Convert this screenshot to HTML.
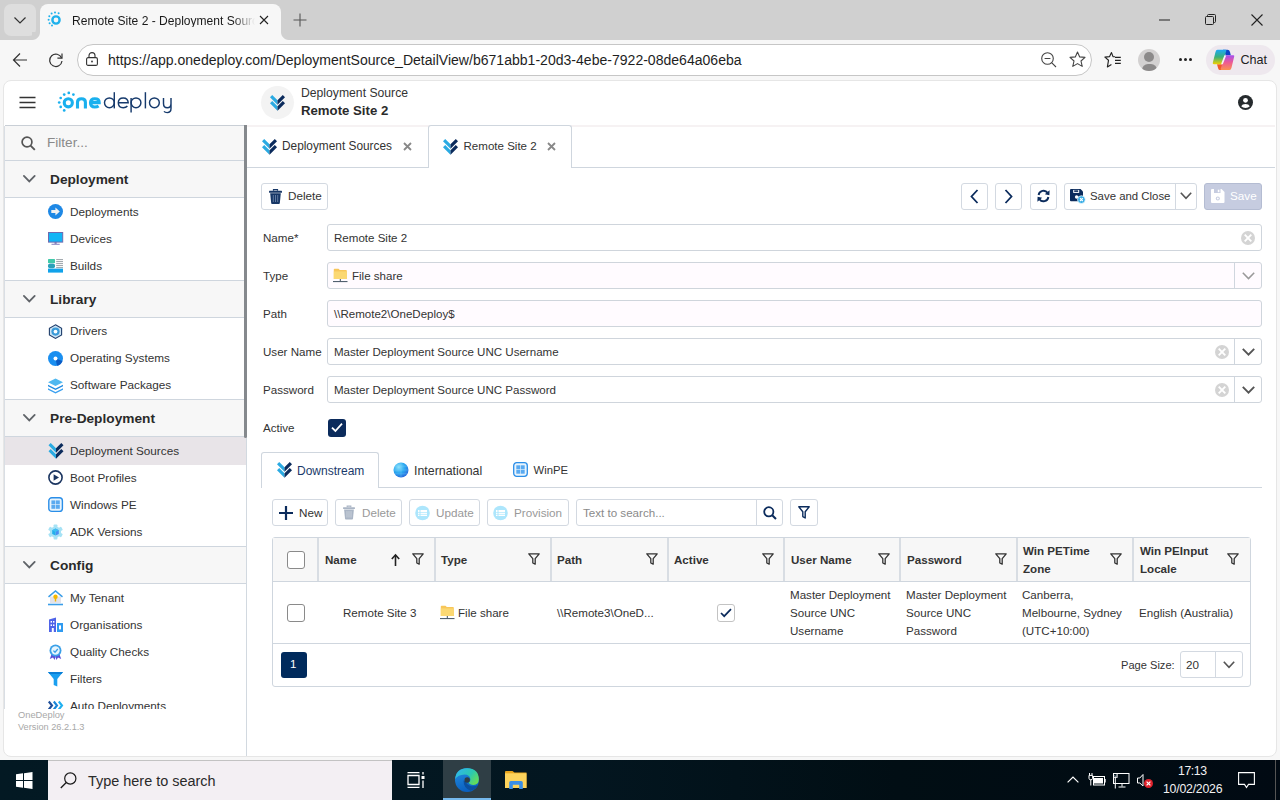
<!DOCTYPE html>
<html><head><meta charset="utf-8">
<style>
*{box-sizing:border-box;margin:0;padding:0}
html,body{width:1280px;height:800px;overflow:hidden;background:#f7f7f7;font-family:"Liberation Sans",sans-serif;color:#333}
.a{position:absolute}
.t{position:absolute;white-space:nowrap;line-height:1}
svg{position:absolute;overflow:visible}
/* browser chrome */
#tabstrip{left:0;top:0;width:1280px;height:40px;background:#d0d0d0}
#toolbar{left:0;top:40px;width:1280px;height:40px;background:#f7f7f7}
#card{left:3px;top:80px;width:1274px;height:677px;background:#fff;border-radius:8px;border:1px solid #e6e6e6}
.sbh{position:absolute;left:5px;width:241px;height:37px;background:#f7f7f7;border-bottom:1px solid #cfd6de}
.sbh .tx{position:absolute;left:45px;top:12px;font-weight:bold;font-size:13.7px;color:#2a2a2a;line-height:1}
.sbi{position:absolute;left:5px;width:238px;height:27px}
.sbi .tx{position:absolute;left:65px;top:8px;font-size:11.75px;color:#333;line-height:1;white-space:nowrap}
.sbi svg{left:43px;top:6px}
.sbb{position:absolute;left:5px;width:241px;height:1px;background:#cfd6de}
.btn{position:absolute;height:27px;border:1px solid #d3d9e1;border-radius:3px;background:#fff}
.inp{position:absolute;left:327px;width:935px;height:27px;border:1px solid #cfd5dc;border-radius:3px;background:#fff}
.lbl{position:absolute;left:263px;font-size:11.6px;color:#333;line-height:1;white-space:nowrap}
.inp .tx{position:absolute;left:6px;top:8px;font-size:11.55px;color:#333;line-height:1;white-space:nowrap}
.gh{position:absolute;top:554px;font-weight:bold;font-size:11.6px;color:#333;line-height:1;white-space:nowrap}
.gc{position:absolute;font-size:11.6px;color:#333;line-height:1;white-space:nowrap}
.vsep{position:absolute;top:538px;width:2px;height:43px;background:#d8dde3}
.sbi.lib .tx{top:7px}
</style></head><body>

<!-- ============ TAB STRIP ============ -->
<div id="tabstrip" class="a">
  <div class="a" style="left:4px;top:4px;width:32px;height:32px;background:#dedede;border-radius:7px"></div>
  <svg style="left:14px;top:17px" width="12" height="7" viewBox="0 0 12 7"><path d="M0.5 0.5 L6 6 L11.5 0.5" fill="none" stroke="#333" stroke-width="1.2"/></svg>
  <div class="a" style="left:40px;top:4px;width:241px;height:36px;background:#f7f7f7;border-radius:8px 8px 0 0"></div>
  <div class="a" style="left:32px;top:32px;width:8px;height:8px;background:radial-gradient(circle at 0 0,#d0d0d0 7.5px,#f7f7f7 8.5px)"></div>
  <div class="a" style="left:281px;top:32px;width:8px;height:8px;background:radial-gradient(circle at 100% 0,#d0d0d0 7.5px,#f7f7f7 8.5px)"></div>
  <!-- favicon -->
  <svg style="left:47px;top:11px" width="16" height="16" viewBox="0 0 16 16">
    <circle cx="9" cy="9" r="3.6" fill="none" stroke="#1fb1ec" stroke-width="2.4"/>
    <g fill="#1fb1ec"><circle cx="8" cy="1.6" r="1"/><circle cx="11.6" cy="2.3" r="1"/><circle cx="4.6" cy="2.6" r="1"/><circle cx="2.3" cy="5.3" r="1"/><circle cx="1.6" cy="8.8" r="1"/><circle cx="2.6" cy="12.2" r="1"/><circle cx="5" cy="14.6" r="1"/></g>
  </svg>
  <div class="t" style="left:72px;top:15px;font-size:12.05px;color:#1a1a1a;width:183px;overflow:hidden;-webkit-mask-image:linear-gradient(90deg,#000 88%,transparent)">Remote Site 2 - Deployment Source</div>
  <svg style="left:259px;top:15px" width="10" height="10" viewBox="0 0 10 10"><path d="M1 1L9 9M9 1L1 9" stroke="#222" stroke-width="1.1"/></svg>
  <svg style="left:293px;top:13px" width="14" height="14" viewBox="0 0 14 14"><path d="M7 0.5V13.5M0.5 7H13.5" stroke="#555" stroke-width="1.1"/></svg>
  <!-- window controls -->
  <svg style="left:1159px;top:19px" width="12" height="2" viewBox="0 0 12 2"><path d="M0 1H11" stroke="#222" stroke-width="1"/></svg>
  <svg style="left:1205px;top:14px" width="12" height="12" viewBox="0 0 12 12"><rect x="0.5" y="2.5" width="8" height="8" rx="1" fill="none" stroke="#222"/><path d="M2.5 2.5V1.5Q2.5 0.5 3.5 0.5H9.5Q10.5 0.5 10.5 1.5V7.5Q10.5 8.5 9.5 8.5H8.5" fill="none" stroke="#222"/></svg>
  <svg style="left:1251px;top:14px" width="12" height="12" viewBox="0 0 12 12"><path d="M0.5 0.5L11.5 11.5M11.5 0.5L0.5 11.5" stroke="#222" stroke-width="1.1"/></svg>
</div>

<!-- ============ TOOLBAR ============ -->
<div id="toolbar" class="a">
  <svg style="left:12px;top:12px" width="16" height="16" viewBox="0 0 16 16"><path d="M15 8H1.5M8 1.5L1.5 8L8 14.5" fill="none" stroke="#333" stroke-width="1.2"/></svg>
  <svg style="left:48px;top:12px" width="16" height="16" viewBox="0 0 16 16"><path d="M13.6 6A6.2 6.2 0 1 0 14 9" fill="none" stroke="#333" stroke-width="1.2"/><path d="M14 1.5V6.2H9.4" fill="none" stroke="#333" stroke-width="1.2"/></svg>
  <div class="a" style="left:77px;top:4px;width:1015px;height:32px;border:1px solid #c6c6c6;border-radius:16px;background:#fff"></div>
  <svg style="left:86px;top:12px" width="12" height="14" viewBox="0 0 12 14"><rect x="0.6" y="5.6" width="10.8" height="7.8" rx="1.5" fill="none" stroke="#333" stroke-width="1.1"/><path d="M3 5.6V3.6A3 3 0 0 1 9 3.6V5.6" fill="none" stroke="#333" stroke-width="1.1"/><circle cx="6" cy="9.5" r="0.9" fill="#333"/></svg>
  <div class="t" style="left:108px;top:13px;font-size:14.05px;color:#1e1e1e">https://app.onedeploy.com/DeploymentSource_DetailView/b671abb1-20d3-4ebe-7922-08de64a06eba</div>
  <svg style="left:1041px;top:12px" width="16" height="16" viewBox="0 0 16 16"><circle cx="6.5" cy="6.5" r="5.8" fill="none" stroke="#444" stroke-width="1.1"/><path d="M3.6 6.5H9.4M10.6 10.6L15 15" stroke="#444" stroke-width="1.1"/></svg>
  <svg style="left:1069px;top:11px" width="17" height="17" viewBox="0 0 17 17"><path d="M8.5 1L10.7 5.9L16 6.4L12 10L13.2 15.4L8.5 12.6L3.8 15.4L5 10L1 6.4L6.3 5.9Z" fill="none" stroke="#444" stroke-width="1.1" stroke-linejoin="round"/></svg>
  <svg style="left:1104px;top:12px" width="18" height="16" viewBox="0 0 18 16"><path d="M11 4.8L9 4.6L7.5 0.6L5.6 4.6L0.9 5.1L4.5 8.3L3.4 14.9L7.4 12.5" fill="none" stroke="#222" stroke-width="1.15" stroke-linejoin="round"/><path d="M11 5.3H16.8M11 8.3H16.8M11 11.4H16.8" stroke="#222" stroke-width="1.15"/></svg>
  <div class="a" style="left:1138px;top:9px;width:22px;height:22px;border-radius:11px;background:#d3d1d1;overflow:hidden">
    <div class="a" style="left:6px;top:3px;width:10px;height:10px;border-radius:5px;background:#8c8a8a"></div>
    <div class="a" style="left:3.5px;top:14.5px;width:15px;height:12px;border-radius:7.5px;background:#8c8a8a"></div>
  </div>
  <div class="a" style="left:1178.5px;top:18.3px;width:3px;height:3px;border-radius:2px;background:#222"></div>
  <div class="a" style="left:1183.6px;top:18.3px;width:3px;height:3px;border-radius:2px;background:#222"></div>
  <div class="a" style="left:1188.5px;top:18.3px;width:3px;height:3px;border-radius:2px;background:#222"></div>
  <div class="a" style="left:1206px;top:5px;width:69px;height:30px;border-radius:15px;background:#eee8ee"></div>
  <svg style="left:1212px;top:9px" width="23" height="22" viewBox="0 0 23 22">
    <defs><linearGradient id="cpl" x1="0" y1="0" x2="0" y2="1"><stop offset="0" stop-color="#1ea8f5"/><stop offset="0.5" stop-color="#3ab07a"/><stop offset="1" stop-color="#f2d000"/></linearGradient>
    <linearGradient id="cpr" x1="0" y1="0" x2="0" y2="1"><stop offset="0" stop-color="#a54ef0"/><stop offset="0.5" stop-color="#ee5a92"/><stop offset="1" stop-color="#fb9050"/></linearGradient></defs>
    <path d="M11 0.8H15.5Q17.5 0.8 18 3L18.8 6.2H13.6L12.6 3Q12.2 1.8 11 1.8Z" fill="#0c43c8"/>
    <path d="M5 15.2H9.6L10.8 18.8Q11.2 20.2 12.4 20.2V21H8Q6.6 21 6.2 19.4Z" fill="#f2572a"/>
    <path d="M5.5 0.8H13.5Q14.6 0.8 14.3 2L10.2 14Q9.8 15.2 8.6 15.2H1.8Q0.4 15.2 0.8 13.8L3.5 3Q4 0.8 5.5 0.8Z" fill="url(#cpl)"/>
    <path d="M17.5 21H9.5Q8.4 21 8.7 19.8L12.8 7.4Q13.2 6.2 14.4 6.2H21.2Q22.6 6.2 22.2 7.6L19.5 18.8Q19 21 17.5 21Z" fill="url(#cpr)"/>
    <path d="M13.2 6.6L10 15" stroke="#f7f2f7" stroke-width="1.7"/>
  </svg>
  <div class="t" style="left:1240.5px;top:14px;font-size:12.6px;color:#222">Chat</div>
</div>

<!-- ============ PAGE CARD ============ -->
<div id="card" class="a"></div>


<!-- ============ APP HEADER ============ -->
<svg style="left:19px;top:96px" width="17" height="13" viewBox="0 0 17 13"><path d="M0.5 1.5H16.5M0.5 6.5H16.5M0.5 11.5H16.5" stroke="#333" stroke-width="1.7"/></svg>
<svg style="left:56px;top:90px" width="120" height="25" viewBox="56 90 120 25">
  <g fill="#1ab0ee"><circle cx="64.2" cy="94.6" r="1.35"/><circle cx="68.8" cy="92.9" r="1.35"/><circle cx="73.4" cy="94.6" r="1.35"/><circle cx="60.7" cy="98" r="1.35"/><circle cx="59.2" cy="102.5" r="1.35"/><circle cx="60.7" cy="106.9" r="1.35"/><circle cx="64.2" cy="110.4" r="1.35"/></g>
  <g fill="none" stroke="#1ab0ee" stroke-width="3.1">
    <circle cx="68.3" cy="102.8" r="4.05"/>
    <path d="M77.5 108.4V102.3Q77.5 98.8 81.4 98.8Q85.4 98.8 85.4 102.3V108.4"/>
    <path d="M90.6 102.6H99.2Q99.2 98.7 94.8 98.7Q90.5 98.7 90.5 102.8Q90.5 107 94.8 107Q97.2 107 98.6 106"/>
  </g>
  <g fill="none" stroke="#163a6c" stroke-width="1.45">
    <circle cx="109.4" cy="102.8" r="4.9"/><path d="M114.3 92.2V108.4"/>
    <path d="M118.4 102.8H128.2Q128 97.9 123.2 97.9Q118.3 97.9 118.3 102.8Q118.3 107.7 123.2 107.7Q126 107.7 127.4 106"/>
    <circle cx="136" cy="102.8" r="4.9"/><path d="M131.1 98V112.6"/>
    <path d="M145.4 92.2V108.4"/>
    <circle cx="154.4" cy="102.8" r="4.9"/>
    <path d="M163.5 97.9V103.4Q163.5 107.7 167.3 107.7Q171 107.7 171 103.4V97.9V108.6Q171 112.6 167.2 112.6Q165 112.6 164 111.4"/>
  </g>
</svg>
<div class="a" style="left:261px;top:86px;width:33px;height:33px;border-radius:17px;background:#f3f3f3"></div>
<svg style="left:270px;top:95px" width="15" height="16" viewBox="0 0 15 16"><path d="M0 2.2L2.2 0L7.5 5.3V9.7Z M0 8.2L2.2 6L7.5 11.3V15.7Z" fill="#2aaae2"/><path d="M7.5 5.3L12.8 0L15 2.2L7.5 9.7Z M7.5 11.3L12.8 6L15 8.2L7.5 15.7Z" fill="#0b2b5c"/></svg>
<div class="t" style="left:301px;top:87px;font-size:12.2px;color:#333">Deployment Source</div>
<div class="t" style="left:301px;top:104px;font-size:13.2px;font-weight:bold;color:#2b2b2b">Remote Site 2</div>
<svg style="left:1238px;top:95px" width="15" height="15" viewBox="0 0 15 15"><circle cx="7.5" cy="7.5" r="7.5" fill="#262b2e"/><circle cx="7.5" cy="5.3" r="2.4" fill="#fff"/><path d="M3.2 11.2Q4.2 9 7.5 9Q10.8 9 11.8 11.2Q10.2 12.9 7.5 12.9Q4.8 12.9 3.2 11.2Z" fill="#fff"/></svg>
<div class="a" style="left:5px;top:125px;width:241px;height:1px;background:#c9cfd6"></div>
<div class="a" style="left:247px;top:125px;width:1028px;height:2px;background:#f6f2f3"></div>

<!-- ============ SIDEBAR ============ -->
<div class="a" style="left:5px;top:126px;width:239px;height:34px;background:#f7f7f7"></div>
<svg style="left:21px;top:136px" width="15" height="15" viewBox="0 0 15 15"><circle cx="6" cy="6" r="4.9" fill="none" stroke="#555" stroke-width="1.7"/><path d="M9.6 9.6L13.8 13.8" stroke="#555" stroke-width="1.9"/></svg>
<div class="t" style="left:47px;top:136px;font-size:13.6px;color:#8a8a8a">Filter...</div>
<div class="sbb" style="top:160px"></div>
<div class="a" style="left:4px;top:126px;width:1px;height:583px;background:#d9dee4"></div>
<div class="a" style="left:246px;top:126px;width:1px;height:630px;background:#d2d9e0"></div>


<div class="sbh" style="top:161px"><svg style="left:18px;top:14px" width="13" height="8" viewBox="0 0 13 8"><path d="M0.9 0.9L6.3 6.4L11.7 0.9" fill="none" stroke="#5f6368" stroke-width="1.8" stroke-linecap="round"/></svg><span class="tx">Deployment</span></div>
<div class="sbi" style="top:198px"><svg width="16" height="16" viewBox="0 0 16 16"><circle cx="7.5" cy="7.5" r="7.5" fill="#1e88e5"/><path d="M3.3 6H7.4V3.4L11.8 7.5L7.4 11.6V9H3.3Z" fill="#f2f2f2"/></svg><span class="tx">Deployments</span></div>
<div class="sbi" style="top:225px"><svg width="16" height="16" viewBox="0 0 16 16"><rect x="0.5" y="1.5" width="14.2" height="9.6" fill="#12b5f5" stroke="#6f6aae" stroke-width="1"/><path d="M6.5 11.2V12.8H8.7V11.2Z" fill="#6f6aae"/><path d="M3.5 13.3H11.7" stroke="#8e8ac4" stroke-width="1.1"/></svg><span class="tx">Devices</span></div>
<div class="sbi" style="top:252px"><svg width="16" height="16" viewBox="0 0 16 16"><rect x="0" y="1" width="7" height="4" rx="0.6" fill="#40c9a9"/><rect x="0" y="5.4" width="7" height="4.8" rx="2" fill="#2aa0b8"/><rect x="0" y="10.6" width="15" height="4" fill="#10a2ea"/><path d="M8.2 1.6H15M8.2 3.6H15M8.2 5.6H15M8.2 7.6H15M8.2 9.6H15" stroke="#9aa3a8" stroke-width="1"/></svg><span class="tx">Builds</span></div>
<div class="sbb" style="top:280px"></div>

<div class="sbh" style="top:281px"><svg style="left:18px;top:14px" width="13" height="8" viewBox="0 0 13 8"><path d="M0.9 0.9L6.3 6.4L11.7 0.9" fill="none" stroke="#5f6368" stroke-width="1.8" stroke-linecap="round"/></svg><span class="tx">Library</span></div>
<div class="sbi lib" style="top:318px"><svg width="16" height="16" viewBox="0 0 16 16"><path d="M7.5 0.8L13.6 4.2V11L7.5 14.4L1.4 11V4.2Z" fill="#cde5f5" stroke="#1f3d6b" stroke-width="1.1"/><circle cx="7.5" cy="7.6" r="4.1" fill="#3a9ad8"/><circle cx="7.5" cy="7.6" r="1.9" fill="#fff"/></svg><span class="tx">Drivers</span></div>
<div class="sbi lib" style="top:345px"><svg width="16" height="16" viewBox="0 0 16 16"><circle cx="7.5" cy="7.5" r="7.5" fill="#1a8ff0"/><path d="M7.5 7.5L14.5 10A7.5 7.5 0 0 1 9 14.8Z" fill="#0b5bc4"/><circle cx="7.5" cy="7.5" r="2" fill="#fff"/></svg><span class="tx">Operating Systems</span></div>
<div class="sbi lib" style="top:372px"><svg width="16" height="16" viewBox="0 0 16 16"><path d="M7.5 0.5L15 4.2L7.5 8L0 4.2Z" fill="#4fb8f0"/><path d="M0 6.8L7.5 10.6L15 6.8V8.3L7.5 12.1L0 8.3Z" fill="#1f8ae0"/><path d="M0 10.3L7.5 14.1L15 10.3V11.8L7.5 15.6L0 11.8Z" fill="#3aa0f0"/></svg><span class="tx">Software Packages</span></div>
<div class="sbb" style="top:399px"></div>

<div class="sbh" style="top:400px"><svg style="left:18px;top:14px" width="13" height="8" viewBox="0 0 13 8"><path d="M0.9 0.9L6.3 6.4L11.7 0.9" fill="none" stroke="#5f6368" stroke-width="1.8" stroke-linecap="round"/></svg><span class="tx">Pre-Deployment</span></div>
<div class="sbi" style="top:437px;width:241px;height:28px;background:#e8e4e8"><svg width="16" height="16" viewBox="0 0 15 16"><path d="M0 2.2L2.2 0L7.5 5.3V9.7Z M0 8.2L2.2 6L7.5 11.3V15.7Z" fill="#2aaae2"/><path d="M7.5 5.3L12.8 0L15 2.2L7.5 9.7Z M7.5 11.3L12.8 6L15 8.2L7.5 15.7Z" fill="#0b2b5c"/></svg><span class="tx">Deployment Sources</span></div>
<div class="sbi" style="top:464px"><svg width="16" height="16" viewBox="0 0 16 16"><circle cx="7.5" cy="7.5" r="6.6" fill="none" stroke="#1b3560" stroke-width="1.6"/><path d="M5.6 4.2L11 7.5L5.6 10.8Z" fill="#1b3560"/></svg><span class="tx">Boot Profiles</span></div>
<div class="sbi" style="top:491px"><svg width="16" height="16" viewBox="0 0 16 16"><rect x="0.8" y="0.8" width="13.6" height="13.6" rx="3" fill="#e8f4fd" stroke="#2a8ee8" stroke-width="1.4"/><rect x="3.4" y="3.4" width="3.9" height="3.9" fill="#5aaaf0"/><rect x="7.9" y="3.4" width="3.9" height="3.9" fill="#5aaaf0"/><rect x="3.4" y="7.9" width="3.9" height="3.9" fill="#5aaaf0"/><rect x="7.9" y="7.9" width="3.9" height="3.9" fill="#5aaaf0"/></svg><span class="tx">Windows PE</span></div>
<div class="sbi" style="top:518px"><svg width="16" height="16" viewBox="0 0 16 16"><g fill="#a6e2f5"><circle cx="7.5" cy="8" r="5.6"/><rect x="5.6" y="0.5" width="3.8" height="15" rx="0.8"/><rect x="5.6" y="0.5" width="3.8" height="15" rx="0.8" transform="rotate(60 7.5 8)"/><rect x="5.6" y="0.5" width="3.8" height="15" rx="0.8" transform="rotate(120 7.5 8)"/></g><path d="M7.5 4.6L10.8 6.3V9.9L7.5 11.6Z" fill="#4a8ef2"/><path d="M7.5 4.6L4.2 6.3V9.9L7.5 11.6Z" fill="#22b0ec"/><path d="M4.2 6.3L7.5 4.6L10.8 6.3L7.5 8Z" fill="#3cc0f5"/></svg><span class="tx">ADK Versions</span></div>
<div class="sbb" style="top:546px"></div>

<div class="sbh" style="top:547px"><svg style="left:18px;top:14px" width="13" height="8" viewBox="0 0 13 8"><path d="M0.9 0.9L6.3 6.4L11.7 0.9" fill="none" stroke="#5f6368" stroke-width="1.8" stroke-linecap="round"/></svg><span class="tx">Config</span></div>
<div class="a" style="left:5px;top:584px;width:238px;height:125px;overflow:hidden">
 <div class="sbi" style="left:0;top:0"><svg width="16" height="16" viewBox="0 0 16 16"><path d="M2 6.5H13V13H2Z" fill="#e2e2ea"/><path d="M0.5 6.8L7.5 1L14.5 6.8" fill="none" stroke="#3a9de8" stroke-width="1.5"/><circle cx="7.5" cy="6.8" r="2.2" fill="#f5b800"/><path d="M6.8 8H8.2V11.5H6.8Z" fill="#f5b800"/><path d="M0 14.5H15" stroke="#3a9de8" stroke-width="1.6"/></svg><span class="tx">My Tenant</span></div>
 <div class="sbi" style="left:0;top:27px"><svg width="16" height="16" viewBox="0 0 16 16"><path d="M1 2.5L8 0.5V15H1Z" fill="#4f63e8"/><path d="M9 6H15V15H9Z" fill="#2f9af0"/><g fill="#fff"><rect x="2.6" y="4" width="1.4" height="1.6"/><rect x="5" y="4" width="1.4" height="1.6"/><rect x="2.6" y="7.4" width="1.4" height="1.6"/><rect x="5" y="7.4" width="1.4" height="1.6"/><rect x="3.8" y="11" width="2" height="4"/><rect x="11" y="8.4" width="2" height="4"/></g></svg><span class="tx">Organisations</span></div>
 <div class="sbi" style="left:0;top:54px"><svg width="16" height="16" viewBox="0 0 16 16"><path d="M4 9L1.8 15L5 13.6L6.6 16L8 11Z M11 9L13.2 15L10 13.6L8.4 16L7 11Z" fill="#5a4fd8"/><circle cx="7.5" cy="6.5" r="6" fill="#3aa0e8"/><circle cx="7.5" cy="6.5" r="4.2" fill="#e6f5fd"/><path d="M5.4 6.6L7 8.2L9.8 5" fill="none" stroke="#3aa0e8" stroke-width="1.3"/></svg><span class="tx">Quality Checks</span></div>
 <div class="sbi" style="left:0;top:81px"><svg width="16" height="16" viewBox="0 0 16 16"><path d="M0 1H15L9.3 8V15.5L5.7 14V8Z" fill="#1a9ff0"/><path d="M0 1H15L13.5 3H1.5Z" fill="#0b7fd6"/></svg><span class="tx">Filters</span></div>
 <div class="sbi" style="left:0;top:108px"><svg width="16" height="16" viewBox="0 0 16 16"><g fill="none" stroke-width="2.1"><path d="M0.8 3.5L4 7.5L0.8 11.5" stroke="#1f4f9a"/><path d="M5.8 3.5L9 7.5L5.8 11.5" stroke="#1a86d8"/><path d="M10.8 3.5L14 7.5L10.8 11.5" stroke="#20b0f0"/></g></svg><span class="tx">Auto Deployments</span></div>
</div>
<div class="a" style="left:244px;top:125px;width:3px;height:313px;background:#85898d;border-radius:0 0 1.5px 1.5px"></div>
<div class="t" style="left:18px;top:711px;font-size:9.3px;color:#a8a8a8">OneDeploy</div>
<div class="t" style="left:18px;top:723px;font-size:9.2px;color:#a8a8a8">Version 26.2.1.3</div>


<!-- ============ MAIN: DOC TABS ============ -->
<div class="a" style="left:247px;top:167px;width:1028px;height:1px;background:#cfd6de"></div>
<svg style="left:262px;top:139px" width="15" height="16" viewBox="0 0 15 16"><path d="M0 2.2L2.2 0L7.5 5.3V9.7Z M0 8.2L2.2 6L7.5 11.3V15.7Z" fill="#2aaae2"/><path d="M7.5 5.3L12.8 0L15 2.2L7.5 9.7Z M7.5 11.3L12.8 6L15 8.2L7.5 15.7Z" fill="#0b2b5c"/></svg>
<div class="t" style="left:282px;top:141px;font-size:11.85px;color:#333">Deployment Sources</div>
<svg style="left:403px;top:142px" width="9" height="9" viewBox="0 0 9 9"><path d="M1 1L8 8M8 1L1 8" stroke="#888" stroke-width="1.8"/></svg>
<div class="a" style="left:428px;top:125px;width:144px;height:43px;background:#fff;border:1px solid #cfd6de;border-bottom:none;border-radius:3px 3px 0 0"></div>
<svg style="left:443px;top:139px" width="15" height="16" viewBox="0 0 15 16"><path d="M0 2.2L2.2 0L7.5 5.3V9.7Z M0 8.2L2.2 6L7.5 11.3V15.7Z" fill="#2aaae2"/><path d="M7.5 5.3L12.8 0L15 2.2L7.5 9.7Z M7.5 11.3L12.8 6L15 8.2L7.5 15.7Z" fill="#0b2b5c"/></svg>
<div class="t" style="left:463.5px;top:140.6px;font-size:11.55px;color:#333">Remote Site 2</div>
<svg style="left:547px;top:142px" width="9" height="9" viewBox="0 0 9 9"><path d="M1 1L8 8M8 1L1 8" stroke="#888" stroke-width="1.8"/></svg>

<!-- ============ MAIN: TOOLBAR ============ -->
<div class="btn" style="left:261px;top:183px;width:67px"></div>
<svg style="left:269px;top:189px" width="13" height="15" viewBox="0 0 13 15"><path d="M4.5 1.8V0.6H8.5V1.8" fill="none" stroke="#173766" stroke-width="1.2"/><rect x="0" y="1.8" width="13" height="1.9" rx="0.5" fill="#173766"/><path d="M1.2 4.2H11.8L10.8 14.2Q10.7 15 9.9 15H3.1Q2.3 15 2.2 14.2Z" fill="#173766"/><path d="M4.3 6V13M6.5 6V13M8.7 6V13" stroke="#6b83a8" stroke-width="0.9"/></svg>
<div class="t" style="left:288px;top:190px;font-size:11.7px;color:#333">Delete</div>

<div class="btn" style="left:961px;top:183px;width:27px"></div>
<svg style="left:970px;top:189px" width="9" height="15" viewBox="0 0 9 15"><path d="M7.5 1L1.5 7.5L7.5 14" fill="none" stroke="#0b2b5c" stroke-width="1.8"/></svg>
<div class="btn" style="left:995px;top:183px;width:27px"></div>
<svg style="left:1004px;top:189px" width="9" height="15" viewBox="0 0 9 15"><path d="M1.5 1L7.5 7.5L1.5 14" fill="none" stroke="#0b2b5c" stroke-width="1.8"/></svg>
<div class="btn" style="left:1030px;top:183px;width:27px"></div>
<svg style="left:1036px;top:189px" width="15" height="14" viewBox="0 0 15 14"><path d="M2.6 6A5 5 0 0 1 11.6 3.8" fill="none" stroke="#0b2b5c" stroke-width="1.9"/><path d="M13.6 1.3L13.4 6.2L8.8 5.2Z" fill="#0b2b5c"/><path d="M12.4 8A5 5 0 0 1 3.4 10.2" fill="none" stroke="#0b2b5c" stroke-width="1.9"/><path d="M1.4 12.7L1.6 7.8L6.2 8.8Z" fill="#0b2b5c"/></svg>

<div class="btn" style="left:1064px;top:183px;width:133px"></div>
<div class="a" style="left:1175px;top:184px;width:1px;height:25px;background:#d3d9e1"></div>
<svg style="left:1070px;top:189px" width="16" height="15" viewBox="0 0 16 15"><path d="M0 1Q0 0 1 0H10.5L13 2.5V11.5Q13 12.3 12.2 12.3H1Q0 12.3 0 11.3Z" fill="#0b2b5c"/><rect x="3.2" y="0.9" width="6" height="3" fill="#fff"/><rect x="4.2" y="1.3" width="4" height="1.6" fill="#0b2b5c"/><circle cx="6.6" cy="8" r="1.7" fill="#fff"/><circle cx="11.4" cy="10.6" r="3.9" fill="#3aaee6" stroke="#fff" stroke-width="0.7"/><path d="M10 9.2L12.8 12M12.8 9.2L10 12" stroke="#fff" stroke-width="1.1"/></svg>
<div class="t" style="left:1090px;top:191px;font-size:11.4px;color:#333">Save and Close</div>
<svg style="left:1180px;top:192px" width="12" height="8" viewBox="0 0 12 8"><path d="M0.8 0.8L6 6.4L11.2 0.8" fill="none" stroke="#555" stroke-width="1.6"/></svg>
<div class="a" style="left:1204px;top:183px;width:58px;height:27px;border-radius:3px;background:#c6cce0;border:1px solid #b4bcd2"></div>
<svg style="left:1211px;top:189px" width="14" height="14" viewBox="0 0 14 14"><path d="M0 1Q0 0 1 0H10.5L13.5 3V13Q13.5 14 12.5 14H1Q0 14 0 13Z" fill="#fff"/><rect x="3" y="0" width="6.5" height="4" fill="#c6cce0"/><rect x="6.8" y="0.7" width="1.6" height="2.5" fill="#fff"/><circle cx="6.8" cy="9.6" r="2" fill="#c6cce0"/><circle cx="6.8" cy="9.6" r="1" fill="#fff"/></svg>
<div class="t" style="left:1230px;top:190px;font-size:11.7px;color:#fff">Save</div>

<!-- ============ MAIN: FORM ============ -->
<div class="lbl" style="top:232px">Name*</div>
<div class="inp" style="top:224px"><span class="tx">Remote Site 2</span><svg style="left:913px;top:6px" width="14" height="14" viewBox="0 0 14 14"><circle cx="7" cy="7" r="7" fill="#d4d4d4"/><path d="M3.7 3.7L10.3 10.3M10.3 3.7L3.7 10.3" stroke="#fff" stroke-width="1.9"/></svg></div>
<div class="lbl" style="top:270px">Type</div>
<div class="inp" style="top:262px;background:#fffbff"><svg style="left:5px;top:5px" width="15" height="15" viewBox="0 0 15 15"><path d="M0.8 1.5Q0.8 0.8 1.5 0.8H5.5L6.8 2H13Q13.8 2 13.8 2.8V11H0.8Z" fill="#f7c65a"/><path d="M0.8 3.4H13.8V11H0.8Z" fill="#fbd873"/><path d="M7.3 11V13.3M0 13.6H14.5" stroke="#3f5060" stroke-width="1"/></svg><span class="tx" style="left:24px">File share</span><div class="a" style="left:906px;top:0;width:1px;height:25px;background:#cfd6de"></div><svg style="left:914px;top:9px" width="13" height="8" viewBox="0 0 13 8"><path d="M0.8 0.8L6.5 6.6L12.2 0.8" fill="none" stroke="#999" stroke-width="1.5"/></svg></div>
<div class="lbl" style="top:308px">Path</div>
<div class="inp" style="top:300px;background:#fffbff"><span class="tx">\\Remote2\OneDeploy$</span></div>
<div class="lbl" style="top:346px">User Name</div>
<div class="inp" style="top:338px"><span class="tx">Master Deployment Source UNC Username</span><svg style="left:887px;top:6px" width="14" height="14" viewBox="0 0 14 14"><circle cx="7" cy="7" r="7" fill="#d4d4d4"/><path d="M3.7 3.7L10.3 10.3M10.3 3.7L3.7 10.3" stroke="#fff" stroke-width="1.9"/></svg><div class="a" style="left:906px;top:0;width:1px;height:25px;background:#cfd6de"></div><svg style="left:914px;top:9px" width="13" height="8" viewBox="0 0 13 8"><path d="M0.8 0.8L6.5 6.6L12.2 0.8" fill="none" stroke="#555" stroke-width="1.9"/></svg></div>
<div class="lbl" style="top:384px">Password</div>
<div class="inp" style="top:376px"><span class="tx">Master Deployment Source UNC Password</span><svg style="left:887px;top:6px" width="14" height="14" viewBox="0 0 14 14"><circle cx="7" cy="7" r="7" fill="#d4d4d4"/><path d="M3.7 3.7L10.3 10.3M10.3 3.7L3.7 10.3" stroke="#fff" stroke-width="1.9"/></svg><div class="a" style="left:906px;top:0;width:1px;height:25px;background:#cfd6de"></div><svg style="left:914px;top:9px" width="13" height="8" viewBox="0 0 13 8"><path d="M0.8 0.8L6.5 6.6L12.2 0.8" fill="none" stroke="#555" stroke-width="1.9"/></svg></div>
<div class="lbl" style="top:422px">Active</div>
<div class="a" style="left:328px;top:419px;width:18px;height:18px;border-radius:3px;background:#0b2b5c"></div>
<svg style="left:331px;top:422px" width="12" height="11" viewBox="0 0 12 11"><path d="M1 5.6L4.4 9L11 1.6" fill="none" stroke="#fff" stroke-width="1.8"/></svg>


<!-- ============ DETAIL TABS ============ -->
<div class="a" style="left:378px;top:487px;width:884px;height:1px;background:#cfd6de"></div>
<div class="a" style="left:261px;top:452px;width:118px;height:36px;border:1px solid #cfd6de;border-bottom:none;border-radius:3px 3px 0 0;background:#fff"></div>
<svg style="left:277px;top:462px" width="15" height="16" viewBox="0 0 15 16"><path d="M0 2.2L2.2 0L7.5 5.3V9.7Z M0 8.2L2.2 6L7.5 11.3V15.7Z" fill="#2aaae2"/><path d="M7.5 5.3L12.8 0L15 2.2L7.5 9.7Z M7.5 11.3L12.8 6L15 8.2L7.5 15.7Z" fill="#0b2b5c"/></svg>
<div class="t" style="left:297px;top:465px;font-size:12px;color:#1b3a6b">Downstream</div>
<svg style="left:393px;top:462px" width="16" height="16" viewBox="0 0 16 16"><defs><radialGradient id="glb" cx="0.35" cy="0.3" r="0.8"><stop offset="0" stop-color="#8fe3fb"/><stop offset="0.5" stop-color="#2aa8f0"/><stop offset="1" stop-color="#2a5fd8"/></radialGradient></defs><circle cx="8" cy="8" r="7.5" fill="url(#glb)"/><path d="M0.5 8H15.5M8 0.5V15.5M2 4.2H14M2 11.8H14" stroke="#7fd0f8" stroke-width="0.5" opacity="0.6"/></svg>
<div class="t" style="left:414px;top:465px;font-size:12.4px;color:#333">International</div>
<svg style="left:513px;top:462px" width="15" height="15" viewBox="0 0 15 15"><rect x="0.7" y="0.7" width="13.6" height="13.6" rx="3" fill="#e8f4fd" stroke="#2a8ee8" stroke-width="1.3"/><rect x="3.3" y="3.3" width="3.9" height="3.9" fill="#5aaaf0"/><rect x="7.8" y="3.3" width="3.9" height="3.9" fill="#5aaaf0"/><rect x="3.3" y="7.8" width="3.9" height="3.9" fill="#5aaaf0"/><rect x="7.8" y="7.8" width="3.9" height="3.9" fill="#5aaaf0"/></svg>
<div class="t" style="left:533.5px;top:465px;font-size:11.3px;color:#333">WinPE</div>

<!-- ============ GRID TOOLBAR ============ -->
<div class="btn" style="left:272px;top:499px;width:56px"></div>
<svg style="left:279px;top:506px" width="14" height="14" viewBox="0 0 14 14"><path d="M7 0V14M0 7H14" stroke="#0b2b5c" stroke-width="2.2"/></svg>
<div class="t" style="left:299px;top:507px;font-size:11.7px;color:#333">New</div>
<div class="btn" style="left:335px;top:499px;width:67px"></div>
<svg style="left:343px;top:505px" width="12" height="15" viewBox="0 0 13 15"><path d="M4.5 1.8V0.6H8.5V1.8" fill="none" stroke="#aab5c5" stroke-width="1.2"/><rect x="0" y="1.8" width="13" height="1.9" rx="0.5" fill="#aab5c5"/><path d="M1.2 4.2H11.8L10.8 14.2Q10.7 15 9.9 15H3.1Q2.3 15 2.2 14.2Z" fill="#aab5c5"/><path d="M4.3 6V13M6.5 6V13M8.7 6V13" stroke="#d0d7e0" stroke-width="0.9"/></svg>
<div class="t" style="left:362px;top:507px;font-size:11.7px;color:#999">Delete</div>
<div class="btn" style="left:409px;top:499px;width:71px"></div>
<svg style="left:415px;top:506px" width="15" height="15" viewBox="0 0 15 15"><circle cx="7.5" cy="7" r="7.3" fill="#ade6fc"/><rect x="3" y="4" width="9" height="6" fill="#fff"/><path d="M3 6.5H12M3 8.4H12" stroke="#ade6fc" stroke-width="0.7"/><path d="M5 4V10" stroke="#ade6fc" stroke-width="1"/></svg>
<div class="t" style="left:436px;top:507px;font-size:11.7px;color:#999">Update</div>
<div class="btn" style="left:487px;top:499px;width:82px"></div>
<svg style="left:493px;top:506px" width="15" height="15" viewBox="0 0 15 15"><circle cx="7.5" cy="7" r="7.3" fill="#ade6fc"/><rect x="3" y="4" width="9" height="6" fill="#fff"/><path d="M3 6.5H12M3 8.4H12" stroke="#ade6fc" stroke-width="0.7"/><path d="M5 4V10" stroke="#ade6fc" stroke-width="1"/></svg>
<div class="t" style="left:514px;top:507px;font-size:11.7px;color:#999">Provision</div>
<div class="btn" style="left:576px;top:499px;width:207px"></div>
<div class="a" style="left:756px;top:500px;width:1px;height:25px;background:#d3d9e1"></div>
<div class="t" style="left:583px;top:507px;font-size:11.6px;color:#8a8a8a">Text to search...</div>
<svg style="left:763px;top:506px" width="14" height="14" viewBox="0 0 14 14"><circle cx="5.8" cy="5.8" r="4.6" fill="none" stroke="#0b2b5c" stroke-width="1.8"/><path d="M9.2 9.2L13 13" stroke="#0b2b5c" stroke-width="2"/></svg>
<div class="btn" style="left:790px;top:499px;width:28px"></div>
<svg style="left:798px;top:506px" width="12" height="13" viewBox="0 0 12 13"><path d="M0.8 0.8H11.2L7.2 5.8V12L4.8 10.6V5.8Z" fill="none" stroke="#0b2b5c" stroke-width="1.4" stroke-linejoin="round"/></svg>

<!-- ============ GRID ============ -->
<div class="a" style="left:272px;top:537px;width:979px;height:150px;border:1px solid #cfd6de;border-radius:3px;background:#fff"></div>
<div class="a" style="left:273px;top:538px;width:977px;height:44px;background:#f7f7f7;border-bottom:1px solid #cfd6de"></div>
<div class="vsep" style="left:317px"></div>
<div class="vsep" style="left:434px"></div>
<div class="vsep" style="left:550px"></div>
<div class="vsep" style="left:667px"></div>
<div class="vsep" style="left:783px"></div>
<div class="vsep" style="left:899px"></div>
<div class="vsep" style="left:1016px"></div>
<div class="vsep" style="left:1132px"></div>
<div class="a" style="left:287px;top:551px;width:18px;height:18px;border:1px solid #8a8a8a;border-radius:3px;background:#fff"></div>
<div class="gh" style="left:325px">Name</div>
<svg style="left:391px;top:554px" width="9" height="12" viewBox="0 0 9 12"><path d="M4.5 1.5V12" stroke="#222" stroke-width="1.6"/><path d="M0.8 5L4.5 1L8.2 5" fill="none" stroke="#222" stroke-width="1.6"/></svg>
<svg style="left:412px;top:553px" width="12" height="12" viewBox="0 0 12 12"><path d="M0.8 0.8H11.2L7.2 5.6V11.2L4.8 10V5.6Z" fill="none" stroke="#333" stroke-width="1.3" stroke-linejoin="round"/></svg>
<div class="gh" style="left:441px">Type</div>
<svg style="left:528px;top:553px" width="12" height="12" viewBox="0 0 12 12"><path d="M0.8 0.8H11.2L7.2 5.6V11.2L4.8 10V5.6Z" fill="none" stroke="#333" stroke-width="1.3" stroke-linejoin="round"/></svg>
<div class="gh" style="left:557px">Path</div>
<svg style="left:646px;top:553px" width="12" height="12" viewBox="0 0 12 12"><path d="M0.8 0.8H11.2L7.2 5.6V11.2L4.8 10V5.6Z" fill="none" stroke="#333" stroke-width="1.3" stroke-linejoin="round"/></svg>
<div class="gh" style="left:674px">Active</div>
<svg style="left:762px;top:553px" width="12" height="12" viewBox="0 0 12 12"><path d="M0.8 0.8H11.2L7.2 5.6V11.2L4.8 10V5.6Z" fill="none" stroke="#333" stroke-width="1.3" stroke-linejoin="round"/></svg>
<div class="gh" style="left:791px">User Name</div>
<svg style="left:878px;top:553px" width="12" height="12" viewBox="0 0 12 12"><path d="M0.8 0.8H11.2L7.2 5.6V11.2L4.8 10V5.6Z" fill="none" stroke="#333" stroke-width="1.3" stroke-linejoin="round"/></svg>
<div class="gh" style="left:907px">Password</div>
<svg style="left:995px;top:553px" width="12" height="12" viewBox="0 0 12 12"><path d="M0.8 0.8H11.2L7.2 5.6V11.2L4.8 10V5.6Z" fill="none" stroke="#333" stroke-width="1.3" stroke-linejoin="round"/></svg>
<div class="gh" style="left:1023px;top:542px;line-height:18px">Win PETime<br>Zone</div>
<svg style="left:1110px;top:553px" width="12" height="12" viewBox="0 0 12 12"><path d="M0.8 0.8H11.2L7.2 5.6V11.2L4.8 10V5.6Z" fill="none" stroke="#333" stroke-width="1.3" stroke-linejoin="round"/></svg>
<div class="gh" style="left:1140px;top:542px;line-height:18px">Win PEInput<br>Locale</div>
<svg style="left:1227px;top:553px" width="12" height="12" viewBox="0 0 12 12"><path d="M0.8 0.8H11.2L7.2 5.6V11.2L4.8 10V5.6Z" fill="none" stroke="#333" stroke-width="1.3" stroke-linejoin="round"/></svg>

<div class="a" style="left:273px;top:643px;width:977px;height:1px;background:#cfd6de"></div>
<div class="a" style="left:287px;top:604px;width:18px;height:18px;border:1px solid #8a8a8a;border-radius:3px;background:#fff"></div>
<div class="gc" style="left:343px;top:607px">Remote Site 3</div>
<svg style="left:440px;top:605px" width="15" height="15" viewBox="0 0 15 15"><path d="M0.8 1.5Q0.8 0.8 1.5 0.8H5.5L6.8 2H13Q13.8 2 13.8 2.8V11H0.8Z" fill="#f7c65a"/><path d="M0.8 3.4H13.8V11H0.8Z" fill="#fbd873"/><path d="M7.3 11V13.3M0 13.6H14.5" stroke="#3f5060" stroke-width="1"/></svg>
<div class="gc" style="left:458px;top:607px">File share</div>
<div class="gc" style="left:557px;top:607px">\\Remote3\OneD...</div>
<div class="a" style="left:717px;top:604px;width:18px;height:18px;border:1px solid #c3c3c3;border-radius:3px;background:#fff"></div>
<svg style="left:720px;top:608px" width="12" height="10" viewBox="0 0 12 10"><path d="M1 5L4.2 8.2L11 1.2" fill="none" stroke="#0b2b5c" stroke-width="1.7"/></svg>
<div class="gc" style="left:790px;top:586px;line-height:18px">Master Deployment<br>Source UNC<br>Username</div>
<div class="gc" style="left:906px;top:586px;line-height:18px">Master Deployment<br>Source UNC<br>Password</div>
<div class="gc" style="left:1022px;top:586px;line-height:18px">Canberra,<br>Melbourne, Sydney<br>(UTC+10:00)</div>
<div class="gc" style="left:1139px;top:607px">English (Australia)</div>

<div class="a" style="left:281px;top:652px;width:26px;height:26px;border-radius:3px;background:#002a5c"></div>
<div class="t" style="left:290px;top:659px;font-size:11.5px;color:#fff">1</div>
<div class="t" style="left:1121px;top:660px;font-size:11.1px;color:#333">Page Size:</div>
<div class="btn" style="left:1180px;top:651px;width:63px"></div>
<div class="a" style="left:1215px;top:652px;width:1px;height:25px;background:#d3d9e1"></div>
<div class="t" style="left:1186px;top:659px;font-size:11.7px;color:#333">20</div>
<svg style="left:1223px;top:661px" width="12" height="8" viewBox="0 0 12 8"><path d="M0.8 0.8L6 6.4L11.2 0.8" fill="none" stroke="#555" stroke-width="1.6"/></svg>


<!-- ============ TASKBAR ============ -->
<div class="a" style="left:0;top:760px;width:1280px;height:40px;background:linear-gradient(90deg,#031923 0%,#031620 45%,#010e14 70%,#010a13 100%)"></div>
<svg style="left:16px;top:772px" width="17" height="17" viewBox="0 0 17 17"><path d="M0 2.3L7 1.3V8H0Z M8 1.15L16.5 0V8H8Z M0 9H7V15.7L0 14.7Z M8 9H16.5V17L8 15.85Z" fill="#fff"/></svg>
<div class="a" style="left:48px;top:760px;width:344px;height:40px;background:#f3eff3;border-top:1px solid #c2c2c2"></div>
<svg style="left:60px;top:772px" width="17" height="17" viewBox="0 0 17 17"><circle cx="10.3" cy="6.5" r="5.6" fill="none" stroke="#1a1a1a" stroke-width="1.2"/><path d="M6.3 10.5L0.8 16" stroke="#1a1a1a" stroke-width="1.3"/></svg>
<div class="t" style="left:88px;top:774px;font-size:14.45px;color:#2a2a2a">Type here to search</div>
<svg style="left:407px;top:772px" width="18" height="16" viewBox="0 0 18 16"><path d="M1 3.5H12V12.5H1Z" fill="none" stroke="#fff" stroke-width="1.3"/><path d="M1 0.6H12M1 15.4H12M1 0.2V1.2M12 0.2V1.2M1 14.8V15.8M12 14.8V15.8" stroke="#fff" stroke-width="1.3"/><rect x="14.5" y="4" width="3" height="3" fill="#fff"/><path d="M16 0V2.5M16 8.5V16" stroke="#fff" stroke-width="1.3"/></svg>
<div class="a" style="left:443px;top:760px;width:48px;height:40px;background:#2f3e45"></div>
<div class="a" style="left:443px;top:798px;width:48px;height:2px;background:#76b9ed"></div>
<svg style="left:455px;top:768px" width="24" height="24" viewBox="0 0 24 24"><defs><linearGradient id="eb" x1="0" y1="0" x2="0.3" y2="1"><stop offset="0" stop-color="#2590e0"/><stop offset="1" stop-color="#0a60c0"/></linearGradient><linearGradient id="eg" x1="0" y1="0.2" x2="1" y2="0.8"><stop offset="0" stop-color="#30b6ec"/><stop offset="0.55" stop-color="#2cc8b0"/><stop offset="1" stop-color="#6ee04a"/></linearGradient></defs>
<circle cx="12" cy="12" r="12" fill="url(#eb)"/>
<path d="M0.2 11Q1 0.2 12.2 0.2Q23.8 0.4 23.8 11.5Q23.6 16.8 18.5 17Q14.6 17 13.6 14.6Q15.6 13.6 15.4 11.2Q14.6 6.6 9.6 6.6Q2.8 7 0.2 11Z" fill="url(#eg)"/>
<path d="M8.6 12.5Q8.2 19.5 15.5 22.8Q21.5 21 23 17Q20 18.6 16.5 18.2Q11.5 17.4 11.2 13.6Z" fill="#0b4f9e"/>
<circle cx="12.2" cy="12" r="2.7" fill="#2f3e45"/></svg>
<svg style="left:505px;top:771px" width="22" height="19" viewBox="0 0 22 19"><path d="M0 1Q0 0 1 0H7.5L9.5 1.5H21.5V17H0Z" fill="#e8a41c"/><path d="M0 2.3H21.5V17H0Z" fill="#fdd35c"/><path d="M4.2 18V11.6Q4.2 10 5.8 10H16.2Q17.8 10 17.8 11.6V18H14.2V13.8H7.8V18Z" fill="#3a8ee6"/></svg>
<svg style="left:1067px;top:776px" width="12" height="7" viewBox="0 0 12 7"><path d="M0.6 6.4L6 1L11.4 6.4" fill="none" stroke="#fff" stroke-width="1.2"/></svg>
<svg style="left:1088px;top:773px" width="18" height="13" viewBox="0 0 18 13"><path d="M1.5 0V2.2M4 0V2.2" stroke="#fff" stroke-width="1"/><path d="M1 2.4H4.6V5.4Q4.6 6.8 2.8 6.8Q1 6.8 1 5.4Z" fill="none" stroke="#fff" stroke-width="1"/><path d="M2.8 6.8V12.5" stroke="#fff" stroke-width="1"/><rect x="5.5" y="3.5" width="11" height="8.5" fill="none" stroke="#fff" stroke-width="1"/><rect x="5.5" y="5" width="9.5" height="5.5" fill="#fff"/><path d="M17.2 6V9.5" stroke="#fff" stroke-width="1"/></svg>
<svg style="left:1113px;top:773px" width="17" height="16" viewBox="0 0 17 16"><rect x="0.5" y="0.5" width="15.5" height="10" fill="none" stroke="#fff" stroke-width="1"/><rect x="0.5" y="0.5" width="3.6" height="3.8" fill="#031622" stroke="#fff" stroke-width="1"/><path d="M1.5 2.5L2.3 3.3L3.1 2.5" stroke="#fff" stroke-width="0.7" fill="none"/><path d="M2.3 4.3V15.5M9 10.5V13.5M5.5 14H12.5" stroke="#fff" stroke-width="1"/></svg>
<svg style="left:1137px;top:773px" width="18" height="16" viewBox="0 0 18 16"><path d="M0.5 5H2.8L6 1.5V13L2.8 10H0.5Z" fill="none" stroke="#fff" stroke-width="1"/><circle cx="11.5" cy="10.5" r="4.5" fill="#e0222c"/><path d="M9.6 8.6L13.4 12.4M13.4 8.6L9.6 12.4" stroke="#fff" stroke-width="1.2"/></svg>
<div class="t" style="left:1178px;top:765px;font-size:12.3px;letter-spacing:-0.45px;color:#f2f2f2">17:13</div>
<div class="t" style="left:1163px;top:783px;font-size:12.3px;letter-spacing:-0.22px;color:#f2f2f2">10/02/2026</div>
<svg style="left:1238px;top:772px" width="18" height="17" viewBox="0 0 18 17"><path d="M0.6 0.6H16.4V12.4H10.5L8.5 15.5L6.5 12.4H0.6Z" fill="none" stroke="#fff" stroke-width="1.1"/></svg>
<div class="a" style="left:1275px;top:760px;width:1px;height:40px;background:#555"></div>

</body></html>
